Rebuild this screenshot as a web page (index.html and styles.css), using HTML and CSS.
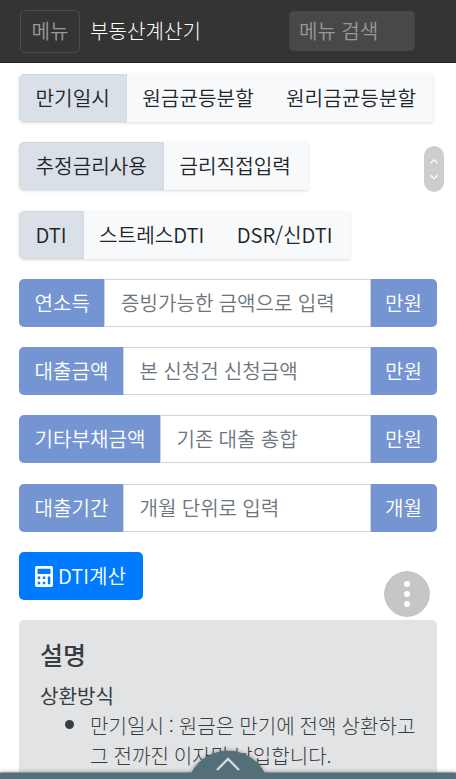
FILE: index.html
```html
<!DOCTYPE html>
<html lang="ko">
<head>
<meta charset="utf-8">
<meta name="viewport" content="width=device-width, initial-scale=1">
<title>부동산계산기</title>
<link rel="stylesheet" href="styles.css">
</head>
<body>
<header class="navbar">
  <button class="menu-toggle">메뉴</button>
  <span class="brand">부동산계산기</span>
  <div class="search">메뉴 검색</div>
</header>
<main class="content">
  <div class="btn-group"><span class="btn active">만기일시</span><span class="btn">원금균등분할</span><span class="btn">원리금균등분할</span></div>
  <div class="btn-group"><span class="btn active">추정금리사용</span><span class="btn">금리직접입력</span></div>
  <div class="btn-group"><span class="btn active">DTI</span><span class="btn">스트레스DTI</span><span class="btn">DSR/신DTI</span></div>
  <div class="input-group"><span class="label">연소득</span><span class="field">증빙가능한 금액으로 입력</span><span class="unit">만원</span></div>
  <div class="input-group"><span class="label">대출금액</span><span class="field">본 신청건 신청금액</span><span class="unit">만원</span></div>
  <div class="input-group"><span class="label">기타부채금액</span><span class="field">기존 대출 총합</span><span class="unit">만원</span></div>
  <div class="input-group"><span class="label">대출기간</span><span class="field">개월 단위로 입력</span><span class="unit">개월</span></div>
  <button class="submit">
    <svg class="calc" viewBox="0 0 18 21"><path fill="#fff" fill-rule="evenodd" d="M2 0H16Q18 0 18 2V19Q18 21 16 21H2Q0 21 0 19V2Q0 0 2 0ZM2.5 2.8V8H15.5V2.8ZM2.7 10.5V13H5.2V10.5ZM7.8 10.5V13H10.3V10.5ZM12.8 10.5V13H15.3V10.5ZM2.7 15.7V18.3H5.2V15.7ZM7.8 15.7V18.3H10.3V15.7ZM12.8 13V18.3H15.3V13Z"/></svg>
    <span>DTI계산</span>
  </button>
  <section class="alert">
    <h4>설명</h4>
    <h5>상환방식</h5>
    <ul><li>만기일시 : 원금은 만기에 전액 상환하고 그 전까진 이자만 납입합니다.</li></ul>
  </section>
</main>
<svg class="scroll-pill" viewBox="0 0 20 46"><rect width="20" height="46" rx="10" fill="#cdcdcd"/><path d="M6.5 17.3L10 13.8L13.5 17.3M6.5 29.2L10 32.7L13.5 29.2" fill="none" stroke="#fff" stroke-width="1.3"/></svg>
<svg class="more" viewBox="0 0 46 46"><circle cx="23" cy="23" r="22.3" fill="#c6c6c6" stroke="#bdbdbd"/><g fill="#fff"><circle cx="23" cy="13" r="3"/><circle cx="23" cy="23" r="3"/><circle cx="23" cy="33" r="3"/></g></svg>
<svg class="drawer" viewBox="0 0 456 40"><path d="M0 33.5H191.5A41.5 41.5 0 0 1 264.5 33.5H456V40H0Z" fill="#546e7a"/><path d="M217 31L228 20L239 31" fill="none" stroke="#d5dadd" stroke-width="2.4"/></svg>
</body>
</html>
```
FILE: styles.css
```css
* { box-sizing: border-box; }
html, body { margin: 0; height: 779px; overflow: hidden; }
body {
  position: relative;
  background: #fff;
  color: #212529;
  font: 350 20.1px/30px "Noto Sans CJK KR", sans-serif;
  word-spacing: -.4px;
}
button { font: inherit; margin: 0; }
.navbar {
  display: flex;
  align-items: center;
  height: 63px;
  padding: 0 41px 0 20px;
  background: #343434;
  border-bottom: 1px solid #222;
}
.menu-toggle {
  width: 60px;
  height: 43px;
  padding: 0;
  color: #999;
  background: transparent;
  border: 1px solid #4b4b4b;
  border-radius: 5px;
}
.brand { margin-left: 10px; color: #fff; font-weight: 300; }
.search {
  width: 126px;
  height: 40px;
  margin-left: auto;
  padding: 5px 10px;
  color: #999;
  background: #484848;
  border-radius: 5px;
}
.content {
  display: flex;
  flex-direction: column;
  align-items: flex-start;
  gap: 20.3px;
  padding: 11px 19px 0;
}
.btn-group {
  display: flex;
  height: 48px;
  border-radius: 5px 0 0 5px;
  box-shadow: 0 1px 3px rgba(0, 0, 0, .15);
}
.btn {
  padding: 8px 16.5px 8px 15.5px;
  border: 1px solid #f8f9fb;
  background: #f8f9fb;
  font-size: 20.2px;
  white-space: nowrap;
}
.btn + .btn { padding-left: 15px; padding-right: 16.3px; margin-left: -1px; }
.btn.active {
  position: relative;
  background: #dae0e7;
  border-color: #d3d9df;
  border-radius: 5px 0 0 5px;
}
.input-group { display: flex; align-self: stretch; height: 48px; }
.label, .unit {
  padding: 9px 15px;
  color: #fff;
  background: #7495d2;
  white-space: nowrap;
}
.label { border-radius: 5px 0 0 5px; padding-left: 15.5px; padding-right: 14.5px; }
.unit { width: 66px; padding: 9px 14px; border-radius: 0 5px 5px 0; }
.field {
  flex: 1;
  padding: 8px 15.5px;
  border: 1px solid #ced4da;
  color: #6c757d;
  white-space: nowrap;
}
.submit {
  display: flex;
  align-items: center;
  gap: 5px;
  width: 124px;
  height: 48px;
  padding: 0 16px;
  color: #fff;
  background: #007bff;
  border: 0;
  border-radius: 5px;
  white-space: nowrap;
}
.calc { width: 18px; height: 21px; }
.alert {
  align-self: stretch;
  height: 180px;
  padding: 16px 20px 0 21px;
  color: #383d41;
  background: #e2e3e5;
  border-radius: 5px;
}
h4 { margin: 0; font-size: 25px; line-height: 36px; font-weight: 500; }
h5 { margin: 11px 0 0; font-size: 20.1px; line-height: 26px; font-weight: 400; }
ul {
  margin: 0 -5px 0 0;
  padding-left: 50px;
  font-weight: 300;
  word-spacing: -.7px;
}
li::marker { font-size: 23px; }
.scroll-pill { position: absolute; left: 424px; top: 146px; width: 20px; height: 46px; }
.more { position: absolute; left: 384px; top: 571px; width: 46px; height: 46px; }
.drawer {
  position: absolute;
  left: 0;
  top: 739px;
  width: 456px;
  height: 40px;
  filter: drop-shadow(0 0 2px rgba(0, 0, 0, .4));
}
```
